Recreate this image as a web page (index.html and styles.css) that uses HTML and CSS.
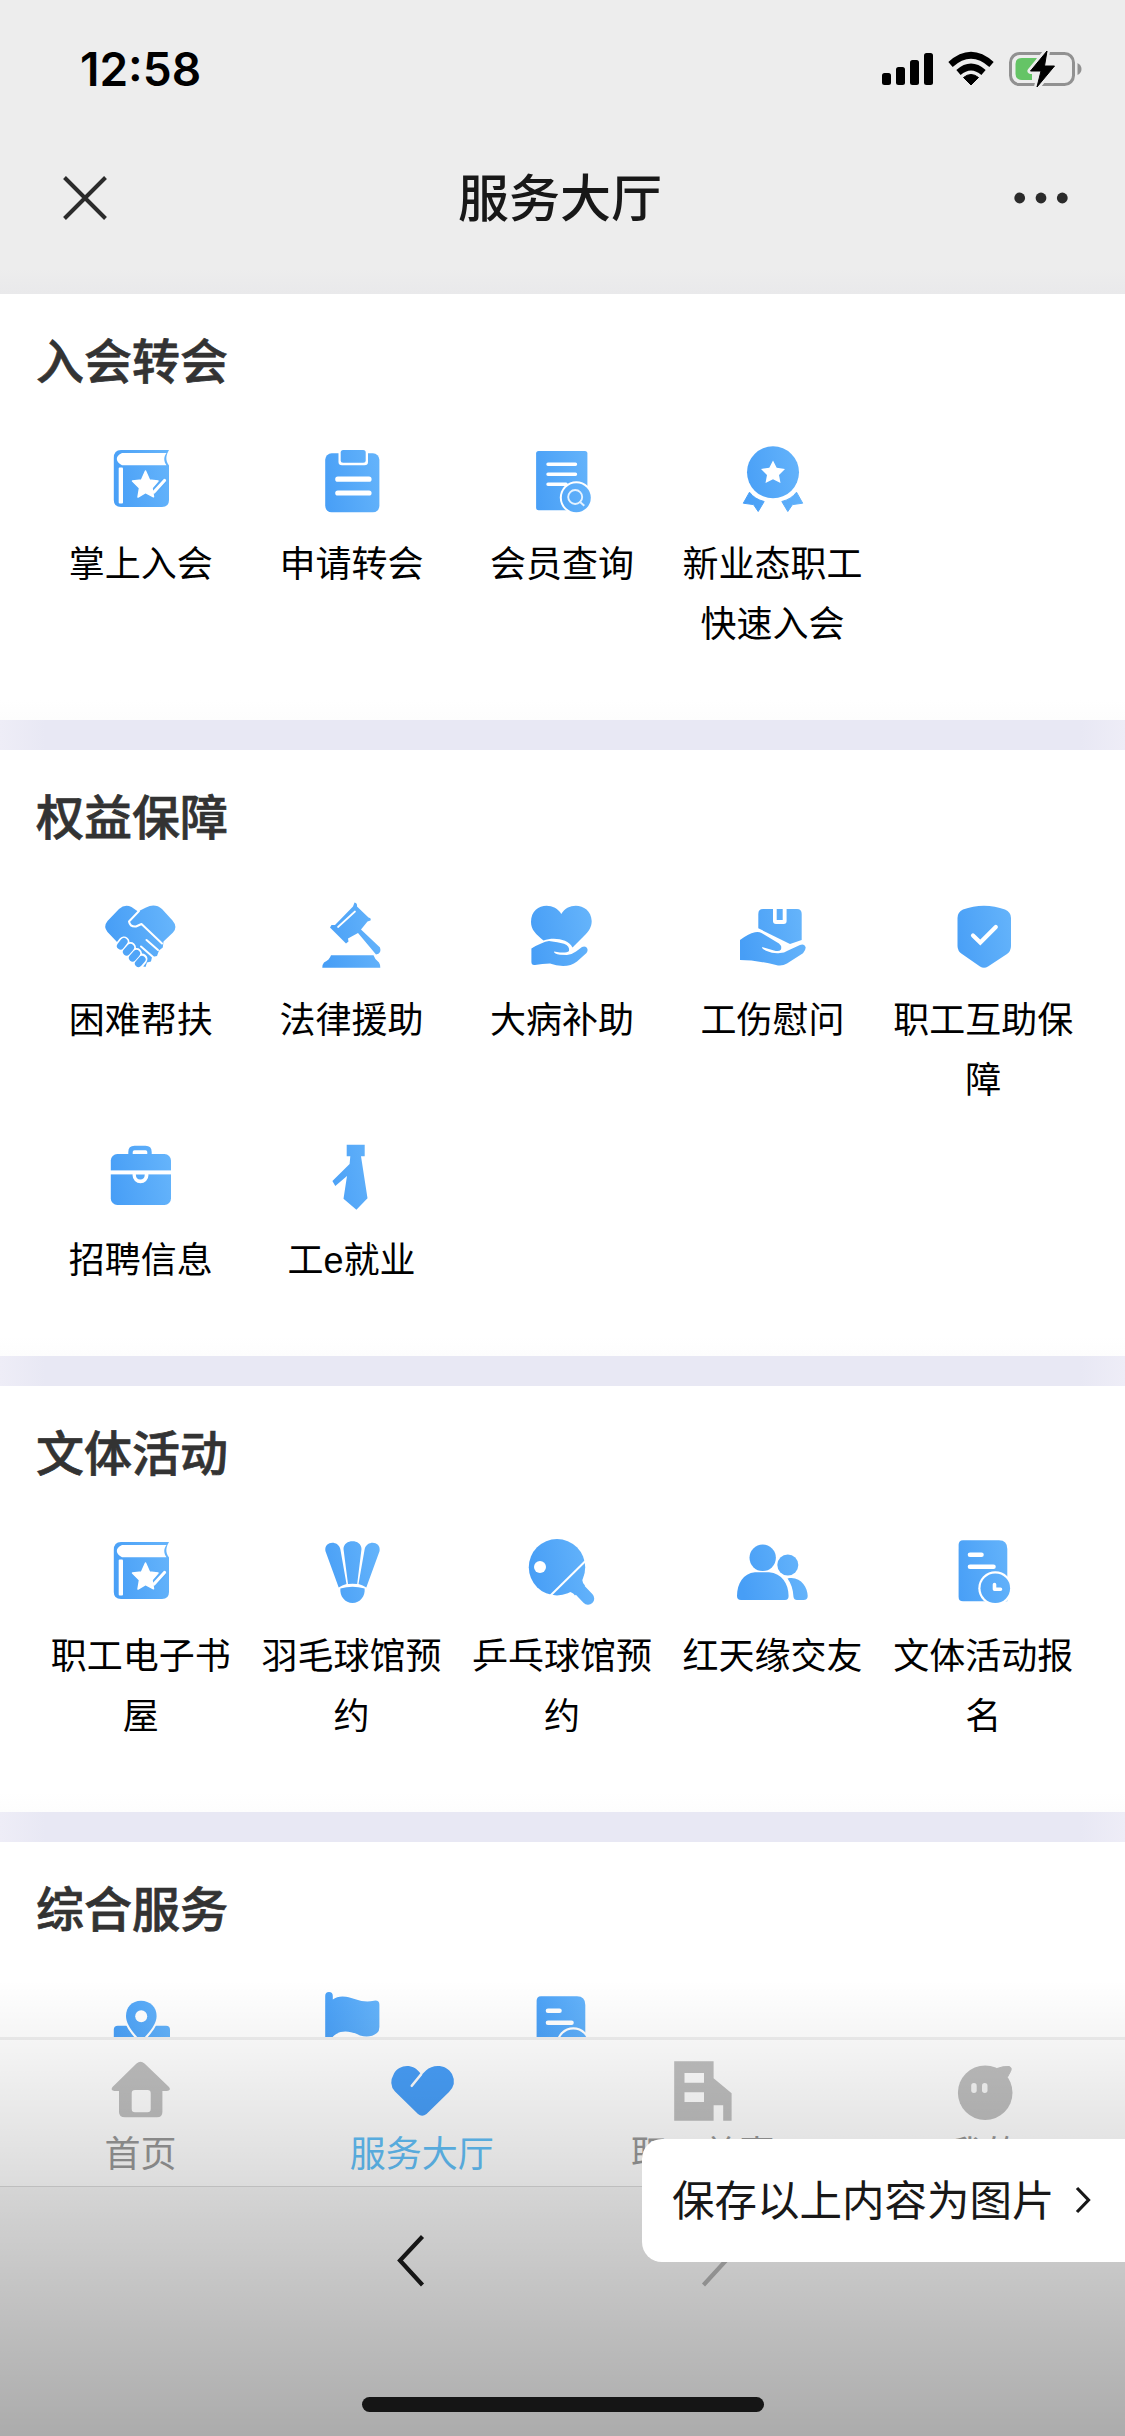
FILE: index.html
```html
<!DOCTYPE html>
<html lang="zh-CN">
<head>
<meta charset="utf-8">
<title>服务大厅</title>
<link rel="stylesheet" href="styles.css">
</head>
<body>
<svg class="defs" width="0" height="0" aria-hidden="true">
  <defs>
    <linearGradient id="blue" gradientUnits="userSpaceOnUse" x1="8" y1="46" x2="72" y2="34">
      <stop offset="0" stop-color="#479ef6"/>
      <stop offset="1" stop-color="#65b4fb"/>
    </linearGradient>
    <symbol id="i-book" viewBox="0 0 80 80">
      <path fill="url(#blue)" d="M20 10H68C65 15 64 20 68 25.5V60Q68 67 61 67H20Q12.8 67 12.8 60V18Q12.8 10 20 10Z"/>
      <path fill="#fff" d="M21 13H65.5C62.500 17 62.500 21 65.500 25.300H21C17.500 23.500 15.800 21 15.800 19C15.800 16.500 17.500 14.500 21 13Z"/>
      <rect fill="#fff" x="17.700" y="27.500" width="4.300" height="36" rx="1"/>
      <path fill="#fff" stroke="#fff" stroke-width="1.500" stroke-linejoin="round" d="M44.500 31L48.500 40L57 41L51 48L52.500 56.800L44.500 52.500L37 57L38.500 48L31.500 41L40.500 40Z"/>
      <path d="M54.500 50L63.500 40.500" stroke="#58abf9" stroke-width="5.500"/>
      <path d="M53 52L63.500 40.500" stroke="#fff" stroke-width="3.200" stroke-linecap="round"/>
    </symbol>
    <symbol id="i-doc-clock" viewBox="0 0 80 80">
      <path fill="url(#blue)" d="M19 8.300H55Q63.300 8.300 63.300 17V69.300H19Q14.600 69.300 14.600 65V13Q14.600 8.300 19 8.300Z"/>
      <path d="M26 22.700H37.500M26 34.700H49.500" stroke="#fff" stroke-width="4.600" stroke-linecap="round"/>
      <circle cx="51.300" cy="56.300" r="17" fill="#fff"/>
      <circle cx="51.300" cy="56.300" r="14.800" fill="url(#blue)"/>
      <path d="M50.500 52.500V57.300H56.500" fill="none" stroke="#fff" stroke-width="3.600" stroke-linecap="round" stroke-linejoin="round"/>
    </symbol>
  </defs>
</svg>

<div class="phone">
  <header class="top">
    <div class="status">
      <span class="time">12:58</span>
      <svg class="status-icons" width="202" height="40" viewBox="0 0 202 40">
        <g fill="#000">
          <rect x="2" y="24" width="9" height="12" rx="2.500"/>
          <rect x="16" y="18" width="9" height="18" rx="2.500"/>
          <rect x="30" y="11" width="9" height="25" rx="2.500"/>
          <rect x="44" y="4" width="9" height="32" rx="2.500"/>
          <path d="M91 36L83.500 28.500Q91 22.500 98.500 28.500Z" stroke="#000" stroke-linejoin="round"/>
        </g>
        <path d="M78.500 23.500Q91 12.500 103.500 23.500" fill="none" stroke="#000" stroke-width="6.500"/>
        <path d="M70.500 15.500Q91 -3 111.500 15.500" fill="none" stroke="#000" stroke-width="6.500"/>
        <rect x="130.500" y="4.500" width="63" height="31" rx="9" fill="none" stroke="#919191" stroke-width="3"/>
        <path d="M197.500 14Q201.500 16 201.500 20T197.500 26Z" fill="#919191"/>
        <path d="M142 9H157L152 20V31H142Q135.500 31 135.500 25V15Q135.500 9 142 9Z" fill="#65c466"/>
        <path d="M167 2L150.500 22H161L157 38L174.500 17H164.500Z" fill="#000" stroke="#ededed" stroke-width="6" stroke-linejoin="round"/>
        <path d="M167 2L150.500 22H161L157 38L174.500 17H164.500Z" fill="#000" stroke="#000" stroke-linejoin="round"/>
      </svg>
    </div>
    <div class="nav">
      <svg width="44" height="44" viewBox="0 0 44 44"><path d="M1.500 1.500L42.500 42.500M42.500 1.500L1.500 42.500" stroke="#2b2b2b" stroke-width="4"/></svg>
      <h1>服务大厅</h1>
      <svg width="54" height="44" viewBox="0 0 54 44" fill="#2b2b2b"><circle cx="5.700" cy="22" r="5.400"/><circle cx="27" cy="22" r="5.400"/><circle cx="48.300" cy="22" r="5.400"/></svg>
    </div>
  </header>

  <main>
    <section>
      <h2>入会转会</h2>
      <div class="grid">
        <a><svg class="ic"><use href="#i-book"/></svg><span>掌上入会</span></a>
        <a><svg class="ic" viewBox="0 0 80 80">
          <rect x="13.200" y="13.300" width="54.200" height="59" rx="6.500" fill="url(#blue)"/>
          <path d="M26.500 10V22Q26.500 25.300 30 25.300H52.500Q56 25.300 56 22V10Z" fill="#fff"/>
          <rect x="28.700" y="10" width="25" height="12.700" rx="2.500" fill="url(#blue)"/>
          <path d="M25.800 39.200H57M25.800 53H57" stroke="#fff" stroke-width="5.200" stroke-linecap="round"/>
        </svg><span>申请转会</span></a>
        <a><svg class="ic" viewBox="0 0 80 80">
          <rect x="14.100" y="11" width="51.300" height="59.300" rx="2.500" fill="url(#blue)"/>
          <path d="M26 24.300H53.500M26 34.300H53.500M26 44.300H44" stroke="#fff" stroke-width="3.400" stroke-linecap="round"/>
          <circle cx="54.300" cy="57.700" r="16.500" fill="#fff"/>
          <circle cx="54.300" cy="57.700" r="14.500" fill="url(#blue)"/>
          <circle cx="53.200" cy="57" r="7" fill="none" stroke="#e4f2ff" stroke-width="1.900"/>
          <path d="M57.500 61.500L62.300 65.800" stroke="#e4f2ff" stroke-width="2"/>
        </svg><span>会员查询</span></a>
        <a><svg class="ic" viewBox="0 0 80 80">
          <circle cx="40" cy="32.300" r="26" fill="url(#blue)"/>
          <path fill="#fff" d="M40 20.500L43.700 27.800L52 29L46 35L47.500 43L40 39.300L32.500 43L34 35L28 29L36.300 27.800Z"/>
          <path fill="url(#blue)" stroke="url(#blue)" stroke-linejoin="round" d="M16.500 52.200C20 57 25 60 31.200 61.500L25.200 71.500L20.500 64.600L10.300 63.200ZM63.500 52.200C60 57 55 60 48.800 61.500L54.800 71.500L59.500 64.600L69.700 63.200Z"/>
        </svg><span>新业态职工快速入会</span></a>
      </div>
    </section>

    <section>
      <h2>权益保障</h2>
      <div class="grid">
        <a><svg class="ic" viewBox="0 0 80 80">
          <path fill="url(#blue)" d="M16 46L6.500 36Q2 30.500 6.500 25L18 13Q24 7.500 30.500 11L37 15.500L45 11.500Q54 7 61 13L71.500 24.500Q77 31 72 36.500L62.500 45.500L61.800 51.500L58 54.500L56 60L51 61L50 65.500L46 66.500L44.500 71L41 70Z"/>
          <path fill="none" stroke="#fff" stroke-width="2" stroke-linecap="round" stroke-linejoin="round" d="M38 15L28 25.500Q29 31 35 30.500L40.500 28L61 47.500M45.500 44L57 54M40 50.500L52 61"/>
          <path stroke="#fff" stroke-width="11" stroke-linecap="round" d="M23 46L19.500 50.500M29.500 51.500L25.500 56M35.500 57.500L31.500 62M41 63L37.500 67.500"/>
          <path stroke="#50a5f8" stroke-width="7.200" stroke-linecap="round" d="M23 45.500L19.500 50M29.500 51.500L25.500 56M35.500 57.500L31.500 62M41 63.500L37.500 67.500"/>
        </svg><span>困难帮扶</span></a>
        <a><svg class="ic" viewBox="0 0 80 80">
          <path fill="url(#blue)" d="M42.500 6.500Q45.500 7 45 10.500L56.500 21.500Q59.500 22 58.500 24.500L55.500 25.500L49 33.500L68 51.500Q70 57.500 64 58.500L46 37L36 42.500L36.500 45.500L34 47.500L18 31.500L19.500 29L23 29L41 10.500Z"/>
          <path d="M26 31L43 15.500" stroke="#fff" stroke-width="1.700" stroke-linecap="round"/>
          <path fill="url(#blue)" d="M19 59.300H61.500Q63 64 67 66.500Q68.500 69 68.300 71.700H10.300Q10.500 68 12 66.500Q17.500 64 19 59.300Z"/>
        </svg><span>法律援助</span></a>
        <a><svg class="ic" viewBox="0 0 80 80">
          <path fill="url(#blue)" d="M39.300 18C32 5 9 7 9 26C9 34 14 38 21.500 44.500C32 41 46 43 50.500 51.500L62 40C67 35 69.700 31 69.700 25C69 7 46 5 39.300 18Z"/>
          <path fill="url(#blue)" d="M9.400 52.500Q20 46 27 45Q36 46 42 47.800Q48 50 47 55Q45 57 38 56.500L32 55.500Q32 58 38 58.800L45 59Q50 58.500 54 55.500L60 51Q64 49.500 65.500 53Q66 55 64.500 57L55 65.500Q49 70 41 70Q34 69.500 28 67.500Q20 67.500 13 69Q9.400 69.500 9.400 66Z"/>
        </svg><span>大病补助</span></a>
        <a><svg class="ic" viewBox="0 0 80 80">
          <path fill="url(#blue)" d="M25.300 18Q25.300 13 30 13H64Q68.700 13 68.700 18V44L57 48L25.300 32.300Z"/>
          <path d="M40 13V25Q40 28 43 28H50.600Q53.600 28 53.600 25V13Z" fill="#fff"/>
          <rect x="43.700" y="13" width="6" height="11" fill="url(#blue)"/>
          <path fill="url(#blue)" d="M7 44Q15 38 22 36.300Q26 35.700 28.500 37L46 47.500Q49 50 48 53.500Q46 56 41 54.500L29 51Q29 53 33 54.700Q41 58 47 57Q51 57 55 54.500L67 49Q71.500 47.500 72.700 51.500Q72.700 54 70 57.300L54 67.500Q49 70.500 43 69Q23 64 7 64Z"/>
        </svg><span>工伤慰问</span></a>
        <a><svg class="ic" viewBox="0 0 80 80">
          <path fill="url(#blue)" d="M40 9.700Q51 9.700 61 13.500Q67 16 67 22V50Q67 55 63 58L44 70.500Q40 73 36 70.500L18 58Q13.500 55 13.500 50V22Q13.500 16 19 13.500Q29 9.700 40 9.700Z"/>
          <path d="M29 39.500L36.300 46.500L51.800 31" fill="none" stroke="#fff" stroke-width="4.200" stroke-linecap="round"/>
        </svg><span>职工互助保障</span></a>
        <a><svg class="ic" viewBox="0 0 80 80">
          <path d="M29.500 21V16Q29.500 12 33.500 12H44.500Q48.500 12 48.500 16V21" fill="none" stroke="url(#blue)" stroke-width="4.400"/>
          <rect x="9.800" y="18" width="60.200" height="51" rx="6.500" fill="url(#blue)"/>
          <rect x="9" y="34.400" width="62" height="4" fill="#fff"/>
          <path d="M31.600 37V39.500A7.900 7.700 0 0 0 47.400 39.500V37Z" fill="#fff"/>
          <path d="M34.800 38.500Q35 43.500 39.300 43.500T43.800 38.500Z" fill="url(#blue)"/>
        </svg><span>招聘信息</span></a>
        <a><svg class="ic" viewBox="0 0 80 80">
          <path fill="url(#blue)" d="M34.700 8.700H52.700V20.300H49L55.500 62.300L44.400 73.700L31.500 62.700L35 40L23.300 50L20.400 45L37.600 28L38.300 20.300H34.700Z"/>
        </svg><span>工e就业</span></a>
      </div>
    </section>

    <section>
      <h2>文体活动</h2>
      <div class="grid">
        <a><svg class="ic"><use href="#i-book"/></svg><span>职工电子书屋</span></a>
        <a><svg class="ic" viewBox="0 0 80 80">
          <path fill="url(#blue)" d="M13.400 19C12 9 26 8 28.300 17L34.500 52Q30 53 26.700 55.500ZM67.600 19C69 9 55 8 52.700 17L46.500 52Q51 53 54.300 55.500ZM31.500 17C31.500 6.500 49.500 6.500 49.500 17L45.200 52Q40.500 51.300 36 52Z"/>
          <path fill="url(#blue)" d="M28.400 56.500Q40.500 53 52.600 56.500C53.500 64 48 71 40.500 71S27.500 64 28.400 56.500Z"/>
        </svg><span>羽毛球馆预约</span></a>
        <a><svg class="ic" viewBox="0 0 80 80">
          <path d="M56 56L66 66.500" stroke="url(#blue)" stroke-width="12.500" stroke-linecap="round"/>
          <path fill="url(#blue)" d="M62 42Q58 49 63 53.500L53 63.500Q48 57 40 62Z"/>
          <circle cx="35" cy="35.200" r="28.200" fill="url(#blue)"/>
          <circle cx="18" cy="35" r="6" fill="#fff"/>
          <path d="M28.500 63.500L64 28.500" stroke="#fff" stroke-width="2"/>
        </svg><span>乒乓球馆预约</span></a>
        <a><svg class="ic" viewBox="0 0 80 80">
          <circle cx="29.700" cy="25.800" r="13.200" fill="url(#blue)"/>
          <circle cx="54.800" cy="33" r="10.500" fill="url(#blue)"/>
          <path fill="url(#blue)" d="M22 40.300H36C49 41.500 55.600 52 55.600 64Q55.600 68 52 68H8Q4 68 4 64C4 52 10 41.500 22 40.300ZM54.500 46.500C67 43.500 74.700 55 74.700 64Q74.700 68 70.500 68H64Q61 68 60.500 65C60 57 58 51 54.500 46.500Z"/>
        </svg><span>红天缘交友</span></a>
        <a><svg class="ic"><use href="#i-doc-clock"/></svg><span>文体活动报名</span></a>
      </div>
    </section>

    <section>
      <h2>综合服务</h2>
      <div class="grid">
        <a><svg class="ic" viewBox="0 0 80 80">
          <rect x="12.800" y="37.700" width="56.200" height="32" rx="4" fill="url(#blue)"/>
          <path d="M40 12.700C31 12.700 25 19 25 28C25 36 32 45 40 53C48 45 55.600 36 55.600 28C55.600 19 49 12.700 40 12.700Z" fill="url(#blue)" stroke="#fff" stroke-width="4.500" paint-order="stroke"/>
          <circle cx="40.200" cy="28.300" r="6" fill="#fff"/>
        </svg></a>
        <a><svg class="ic" viewBox="0 0 80 80">
          <path fill="url(#blue)" d="M17 4Q20.800 4 20.800 8V11.500Q26 7.500 34 8.700C43 10 50 15.500 62 12.700Q67.400 12 67.400 16.500V39Q67.400 43 65 45Q58 50.500 48 47.500C38 42.500 28 41.500 20.800 48.700V72H13.200V8Q13.200 4 17 4Z"/>
        </svg></a>
        <a><svg class="ic"><use href="#i-doc-clock"/></svg></a>
      </div>
    </section>
  </main>

  <nav class="tabs">
    <a><svg viewBox="0 0 60 60">
      <path fill="#bfbfbf" fill-rule="evenodd" d="M25.500 3.500Q29.500 0 33.500 3.500L58 27Q60.500 30.500 56 31H51.400V52Q51.400 57.300 46 57.300H14Q8 57.300 8 52V31H3.500Q-1 30.500 1.500 27ZM24 30Q20.700 30 20.700 33V49Q20.700 52.300 24 52.300H36.500Q39.700 52.300 39.700 49V33Q39.700 30 36.500 30Z"/>
    </svg><span>首页</span></a>
    <a class="on"><svg viewBox="0 0 60 60">
      <path fill="#489ff9" d="M28.500 13.500C21 2.500 7 4.500 2 13.500Q-4 24 3 31.500L26 54Q30 57.500 34.500 54L57 32Q65 24 60 14C55 4.500 41 3.500 34 10.500L19 25.500L20.500 27Z"/>
      <path d="M29 14.500L19.800 25.800" stroke="#fff" stroke-width="2.600" stroke-linecap="round"/>
    </svg><span>服务大厅</span></a>
    <a><svg viewBox="0 0 60 60">
      <path fill="#bfbfbf" fill-rule="evenodd" d="M1.200 1.300H40.600V18.300L58.600 33.300V60.700H50.200V45.300H40.600V60.700H1.200ZM11.500 13V22.700H31V13ZM11.500 32.300V42H31V32.300Z"/>
    </svg><span>职工普惠</span></a>
    <a><svg viewBox="0 0 60 60">
      <circle cx="31.200" cy="32.800" r="27.300" fill="#bfbfbf"/>
      <path d="M43 8.500Q49 6 55 6.500Q58.500 7.500 56.500 11.500L53.500 17Z" fill="#bfbfbf" stroke="#bfbfbf" stroke-linejoin="round"/>
      <rect x="17.200" y="23" width="5.500" height="10" rx="2.700" fill="#f7f7f7"/><rect x="28" y="23" width="5.500" height="10" rx="2.700" fill="#f7f7f7"/>
    </svg><span>我的</span></a>
  </nav>

  <footer>
    <div class="arrows">
      <svg width="28" height="52" viewBox="0 0 28 52"><path d="M25.500 1.500L3 25.500L25.500 50" fill="none" stroke="#1b1b1b" stroke-width="4.200"/></svg>
      <svg width="28" height="52" viewBox="0 0 28 52"><path d="M2.500 1.500L25 25.500L2.500 50" fill="none" stroke="#b4b4b4" stroke-width="4.200"/></svg>
    </div>
  </footer>

  <div class="shade"></div>
  <div class="home-indicator"></div>
  <div class="save">保存以上内容为图片
    <svg width="16" height="28" viewBox="0 0 16 28"><path d="M2 2L13.500 14L2 26" fill="none" stroke="#181818" stroke-width="3.200"/></svg>
  </div>
</div>
</body>
</html>
```
FILE: styles.css
```css
* { box-sizing: border-box; }
body {
  margin: 0;
  font-family: "Liberation Sans", "Noto Sans CJK SC", sans-serif;
  background: #fff;
  color: #000;
}
.defs { position: absolute; }
.phone {
  position: relative;
  display: flex;
  flex-direction: column;
  width: 1125px;
  height: 2436px;
  overflow: hidden;
}

/* status and title bars */
.top {
  flex: none;
  height: 294px;
  background: linear-gradient(#ededed 0 268px, #e9e9eb 294px);
}
.status {
  display: flex;
  justify-content: space-between;
  align-items: center;
  height: 138px;
  padding: 0 43px 0 80px;
}
.time {
  font: 600 46px/60px Inter, sans-serif;
}
.nav {
  display: flex;
  justify-content: space-between;
  align-items: center;
  height: 120px;
  padding: 0 57px 0 63px;
}
h1, h2 { margin: 0; font-weight: 500; }
h1 {
  margin-right: 1px;
  padding-top: 3px;
  font-size: 51px;
  line-height: 72px;
  color: #181818;
}

/* service groups */
main {
  flex: 1;
  min-height: 0;
  overflow: hidden;
  display: flex;
  flex-direction: column;
  gap: 30px;
  background: linear-gradient(90deg, #eeedf7, #e8e8f4 45px 1080px, #eeedf7);
}
section {
  flex: none;
  background: linear-gradient(#fff 0 calc(100% - 20px), #fdfdfd);
  padding: 33px 36px 40px;
}
h2 {
  font-size: 48px;
  line-height: 72px;
  height: 113px;
  color: #333;
  -webkit-text-stroke: 0.7px #333;
}
.grid {
  display: grid;
  grid-template-columns: repeat(5, 1fr);
}
.grid a {
  display: flex;
  flex-direction: column;
  align-items: center;
  padding: 0 14px 25px;
}
.ic { width: 80px; height: 80px; }
.grid span {
  margin: 15px 1px 0 0;
  font-size: 36px;
  line-height: 60px;
  text-align: center;
}

/* page tabs */
.tabs {
  flex: none;
  display: flex;
  height: 149px;
  border-top: 3px solid #efefef;
  background: #fff;
}
.tabs a {
  flex: 1;
  display: flex;
  flex-direction: column;
  align-items: center;
  padding-top: 20px;
  font-size: 36px;
  line-height: 54px;
  color: #999;
}
.tabs svg {
  width: 60px;
  height: 60px;
  margin-bottom: 8px;
  overflow: visible;
}
.tabs .on { color: #62c0f8; }

footer {
  flex: none;
  height: 250px;
  border-top: 1px solid #dcdcdc;
  background: #f7f7f7;
}
.arrows {
  display: flex;
  justify-content: space-between;
  padding: 48px 396px 0 397px;
}

/* layers above the page */
.shade {
  position: absolute;
  inset: 1980px 0 0;
  background: linear-gradient(rgba(0, 0, 0, 0), rgba(0, 0, 0, 0.305));
}
.home-indicator {
  position: absolute;
  left: 362px;
  bottom: 24px;
  width: 402px;
  height: 15px;
  border-radius: 8px;
  background: #151515;
}
.save {
  position: absolute;
  top: 2139px;
  right: 0;
  display: flex;
  align-items: center;
  gap: 20px;
  width: 483px;
  height: 123px;
  padding: 0 0 6px 30px;
  border-radius: 20px 0 0 20px;
  background: #fff;
  color: #181818;
  font-size: 42.5px;
  white-space: nowrap;
}
.save svg { margin-top: 5px; }
```
